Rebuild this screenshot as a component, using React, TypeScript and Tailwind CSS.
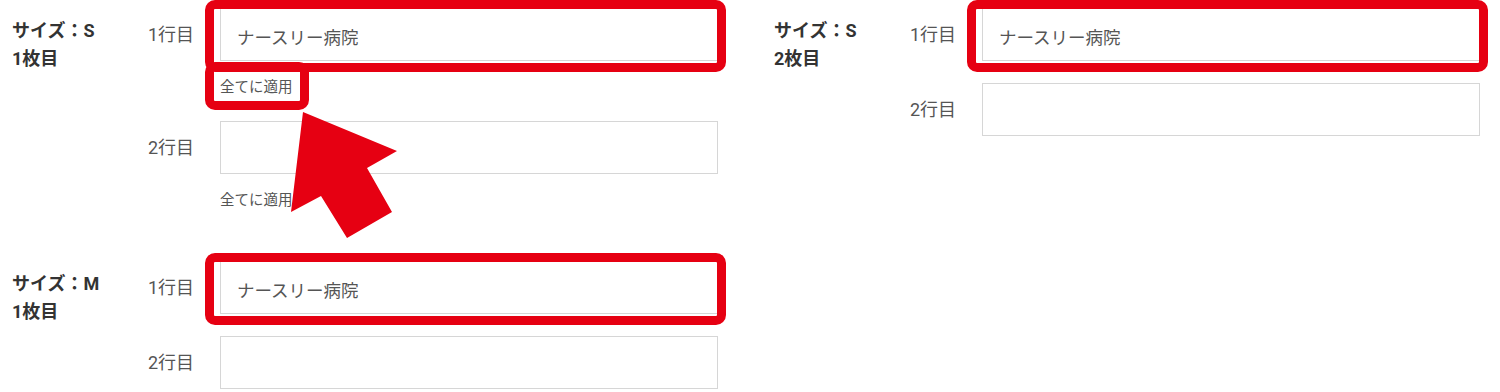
type Row = {
  label: string;
  value?: string;
  highlight?: boolean;
  apply?: boolean;
  applyHighlight?: boolean;
};

type BlockProps = {
  title: string;
  sub: string;
  rows: Row[];
};

function Field({ row }: { row: Row }) {
  return (
    <div className="flex">
      <div className="flex h-[53px] w-[72px] items-center text-[18px] text-[#555]">
        {row.label}
      </div>
      <div className="flex w-[498px] flex-col">
        <div className="relative h-[53px]">
          <input
            readOnly
            value={row.value ?? ""}
            className="h-full w-full border-[1.5px] border-[#d6d6d6] bg-white pt-[4px] pl-[16px] text-[17.5px] text-[#555] outline-none"
          />
          {row.highlight && (
            <div className="pointer-events-none absolute top-[-8px] right-[-8px] bottom-[-11px] left-[-15px] rounded-[10px] border-[9px] border-[#e60012]" />
          )}
        </div>
        {row.apply && (
          <div className="relative mt-[16px] h-[22px] text-[14.5px] leading-[22px] text-[#555]">
            <span>全てに適用</span>
            {row.applyHighlight && (
              <div className="pointer-events-none absolute top-[-15px] left-[-15px] h-[48px] w-[104px] rounded-[10px] border-[9px] border-[#e60012]" />
            )}
          </div>
        )}
      </div>
    </div>
  );
}

function Block({ title, sub, rows }: BlockProps) {
  return (
    <div className="flex">
      <div className="w-[136px] pt-[9px] text-[18px] leading-[28px] font-bold text-[#333]">
        <div>{title}</div>
        <div>{sub}</div>
      </div>
      <div className="flex flex-col gap-[22px]">
        {rows.map((row) => (
          <Field key={row.label} row={row} />
        ))}
      </div>
    </div>
  );
}

export default function App() {
  return (
    <div className="relative h-[392px] w-[1500px] overflow-hidden bg-white font-['Roboto','Noto_Sans_CJK_JP',sans-serif]">
      <div className="flex pt-[8px]">
        <div className="flex w-[762px] flex-col gap-[49px] pl-[12px]">
          <Block
            title="サイズ：S"
            sub="1枚目"
            rows={[
              { label: "1行目", value: "ナースリー病院", highlight: true, apply: true, applyHighlight: true },
              { label: "2行目", apply: true },
            ]}
          />
          <Block
            title="サイズ：M"
            sub="1枚目"
            rows={[
              { label: "1行目", value: "ナースリー病院", highlight: true },
              { label: "2行目" },
            ]}
          />
        </div>
        <div className="flex flex-col pl-[12px]">
          <Block
            title="サイズ：S"
            sub="2枚目"
            rows={[
              { label: "1行目", value: "ナースリー病院", highlight: true },
              { label: "2行目" },
            ]}
          />
        </div>
      </div>
      {/* annotation arrow pointing at the apply-to-all link */}
      <svg
        className="pointer-events-none absolute top-0 left-0"
        width="1500"
        height="392"
        viewBox="0 0 1500 392"
      >
        <polygon
          points="303,112 397,151 367,168 392,212 347,238 321,196 291,212"
          fill="#e60012"
        />
      </svg>
    </div>
  );
}
